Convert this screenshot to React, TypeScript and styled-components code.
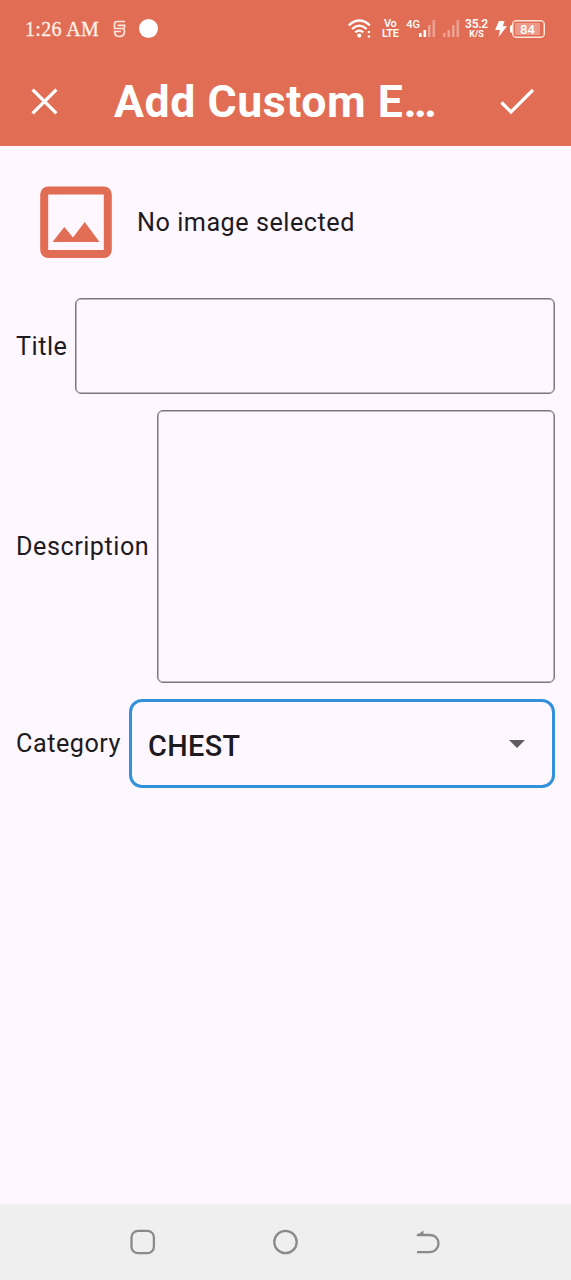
import React from "react";
import styled, { createGlobalStyle } from "styled-components";

const coral = "#e26d55";
const ink = "#1d1b20";

const GlobalStyle = createGlobalStyle`
  * { box-sizing: border-box; }
  body { margin: 0; background: #fef7ff; }
  button { border: 0; padding: 0; background: none; color: inherit; display: flex; }
  svg { display: block; flex: none; }
`;

const Screen = styled.div`
  width: 571px;
  height: 1280px;
  display: flex;
  flex-direction: column;
  overflow: hidden;
  background: #fef7ff;
  color: ${ink};
  font-family: Roboto, "Liberation Sans", sans-serif;
`;

const Header = styled.header`
  height: 146px;
  flex: none;
  background: ${coral};
  color: #fff;
`;

const StatusBar = styled.div`
  height: 57px;
  padding: 0 26px 0 25px;
  display: flex;
  align-items: center;
  justify-content: space-between;
`;

const StatusGroup = styled.div`
  display: flex;
  align-items: center;
`;

const Clock = styled.span`
  width: 75px;
  margin-right: 13px;
  font: 20px/24px "Liberation Serif", serif;
  letter-spacing: 0.35px;
  white-space: nowrap;
  color: #fff1e8;
  -webkit-text-stroke: 0.3px #fff1e8;
`;

const Dot = styled.span`
  width: 19px;
  height: 19px;
  margin-left: 13px;
  border-radius: 50%;
  background: #fff;
`;

const Stacked = styled.span<{ $left: number; $width: number }>`
  width: ${(p) => p.$width}px;
  margin-left: ${(p) => p.$left}px;
  display: flex;
  flex-direction: column;
  align-items: center;
  font-weight: 600;
  font-size: 11px;
  line-height: 10px;
  letter-spacing: -0.3px;
  white-space: nowrap;
`;

const Rate = styled.span`
  font-size: 12px;
  line-height: 11px;
`;

const RateUnit = styled.span`
  font-size: 9px;
  line-height: 8px;
  font-weight: 700;
  letter-spacing: 0;
`;

const Network = styled.span`
  margin: 0 -1px 8px 8px;
  font-size: 11px;
  line-height: 10px;
  font-weight: 500;
`;

const BatteryTip = styled.span`
  width: 2px;
  height: 8px;
  margin-left: 3px;
  border-radius: 2px 0 0 2px;
  background: #fff;
`;

const Battery = styled.span`
  width: 33px;
  height: 18px;
  padding: 2px;
  border: 1px solid #ffe5dc;
  box-shadow: inset 0 0 0 0.5px #ffe5dc;
  border-radius: 4px;
`;

const Charge = styled.span`
  display: block;
  width: 92%;
  height: 100%;
  background: #ee9a8a;
  border-radius: 1px;
  font-size: 13px;
  line-height: 13px;
  font-weight: 500;
  padding-left: 5px;
`;

const AppBar = styled.div`
  height: 89px;
  padding: 0 37px 0 31px;
  display: flex;
  align-items: center;
`;

const Heading = styled.h1`
  margin: 0 0 0 56px;
  white-space: nowrap;
  font-size: 44.6px;
  line-height: 54px;
  letter-spacing: 0.55px;
  font-weight: 700;
`;

const Confirm = styled.button`
  margin-left: auto;
`;

const Form = styled.main`
  flex: 1;
  padding: 40px 16px 0;
  display: flex;
  flex-direction: column;
`;

const ImageRow = styled.div`
  height: 72px;
  margin: 0 0 40px 24px;
  display: flex;
  align-items: center;
  gap: 25px;
`;

const Text = styled.span`
  flex: none;
  padding-top: 1px;
  font-size: 25.2px;
  line-height: 38px;
  letter-spacing: 0.52px;
`;

const Row = styled.label<{ $height: number }>`
  height: ${(p) => p.$height}px;
  margin-bottom: 16px;
  display: flex;
  align-items: center;
  gap: 8px;
`;

const fieldBorder = "1px solid #7c7680";
const fieldEdge = "inset 0 0 0 0.5px #7c7680";

const Input = styled.input`
  flex: 1;
  min-width: 0;
  height: 100%;
  border: ${fieldBorder};
  box-shadow: ${fieldEdge};
  border-radius: 6px;
  background: transparent;
  padding: 0 18px;
  font: 25px Roboto, sans-serif;
  outline: none;
`;

const TextArea = styled.textarea`
  flex: 1;
  min-width: 0;
  height: 100%;
  border: ${fieldBorder};
  box-shadow: ${fieldEdge};
  border-radius: 6px;
  background: transparent;
  padding: 18px;
  font: 25px Roboto, sans-serif;
  resize: none;
  outline: none;
`;

const Select = styled.button`
  && {
    flex: 1;
    height: 100%;
    padding: 0 27px 0 16px;
    align-items: center;
    justify-content: space-between;
    border: 3px solid #3191db;
    border-radius: 13px;
    font: 500 28.8px/36px Roboto, sans-serif;
    letter-spacing: 0.4px;
  }
`;

const Value = styled.span`
  padding-top: 5px;
`;

const NavBar = styled.nav`
  height: 76px;
  flex: none;
  padding: 0 130px;
  display: flex;
  align-items: center;
  justify-content: space-between;
  background: #efefef;
  color: #8a8a8a;
`;

function Signal({ active = 0 }: { active?: number }) {
  return (
    <svg width="17" height="19" viewBox="0 0 17 19" fill="#fff">
      {[4, 7, 12, 17].map((h, i) => (
        <rect key={h} x={i * 4.5} y={18 - h} width="2.6" height={h} rx="0.6" opacity={i < active ? 1 : 0.36} />
      ))}
    </svg>
  );
}

export default function App() {
  return (
    <Screen>
      <GlobalStyle />
      <Header>
        <StatusBar>
          <StatusGroup>
            <Clock>1:26 AM</Clock>
            <svg width="13" height="18" viewBox="0 0 13 18" fill="none" stroke="#ffe5dc" strokeWidth="1.7">
              <path d="M12 1.5H4Q1.5 1.5 1.5 4V8.5H9.5Q11.5 8.5 11.5 11Q11.5 16.5 6.5 16.5Q1.5 16.5 1.5 11.5H8M4.5 5.3H11.5V8" />
            </svg>
            <Dot />
          </StatusGroup>
          <StatusGroup>
            <svg width="24" height="20" viewBox="0 0 24 20" fill="none" stroke="#fff" strokeWidth="2.3">
              <path d="M.8 6.3Q11.3-3.2 21.8 6.3M4 10Q11.3 3.3 18.6 10M7.3 13.4Q11.3 9.8 15.3 13.4" />
              <circle cx="11.3" cy="16.6" r="2.1" fill="#fff" stroke="none" />
              <path d="M19.8 13h2.3M19.8 17.5h2.3" strokeWidth="2" />
            </svg>
            <Stacked $left={10} $width={16}>
              <span>Vo</span>
              <span>LTE</span>
            </Stacked>
            <Network>4G</Network>
            <Signal active={2} />
            <svg width="7" height="1" />
            <Signal />
            <Stacked $left={5} $width={23}>
              <Rate>35.2</Rate>
              <RateUnit>K/S</RateUnit>
            </Stacked>
            <svg width="12" height="16" viewBox="0 0 12 16" fill="#fff" style={{ marginLeft: 7 }}>
              <path d="M4 0H9.5L7.8 5.3H12L3.5 16L5 9H0Z" />
            </svg>
            <BatteryTip />
            <Battery>
              <Charge>84</Charge>
            </Battery>
          </StatusGroup>
        </StatusBar>
        <AppBar>
          <button aria-label="Close">
            <svg width="27" height="27" viewBox="0 0 27 27" fill="none" stroke="#fff" strokeWidth="3.3">
              <path d="M1.6 1.6L25.4 25.4M25.4 1.6L1.6 25.4" />
            </svg>
          </button>
          <Heading>Add Custom E…</Heading>
          <Confirm aria-label="Save">
            <svg width="35" height="27" viewBox="0 0 35 27" fill="none" stroke="#fff" strokeWidth="3.3">
              <path d="M2.5 14.5L12 24L34 2" />
            </svg>
          </Confirm>
        </AppBar>
      </Header>
      <Form>
        <ImageRow>
          <svg width="72" height="72" viewBox="0 0 72 72" fill={coral}>
            <rect x="4.2" y="4.4" width="63.6" height="63.6" rx="4" fill="none" stroke={coral} strokeWidth="8" />
            <path d="M12.5 56L24.3 41L33 51.5L44.7 36L59.5 56Z" />
          </svg>
          <Text>No image selected</Text>
        </ImageRow>
        <Row $height={96}>
          <Text>Title</Text>
          <Input />
        </Row>
        <Row $height={273}>
          <Text>Description</Text>
          <TextArea />
        </Row>
        <Row $height={89}>
          <Text>Category</Text>
          <Select type="button">
            <Value>CHEST</Value>
            <svg width="16" height="8" viewBox="0 0 16 8" fill="#605d62">
              <path d="M0 0H16L8 8Z" />
            </svg>
          </Select>
        </Row>
      </Form>
      <NavBar>
        <svg width="26" height="26" viewBox="0 0 26 26" fill="none" stroke="currentColor" strokeWidth="2.3">
          <rect x="1.5" y="1.8" width="22.4" height="22.4" rx="6.5" />
        </svg>
        <svg width="26" height="26" viewBox="0 0 26 26" fill="none" stroke="currentColor" strokeWidth="2.3">
          <circle cx="12.5" cy="13" r="11.2" />
        </svg>
        <svg width="26" height="26" viewBox="0 0 26 26" fill="none" stroke="currentColor" strokeWidth="2.3">
          <path d="M2 6H14.5C20.5 6 23.5 10 23.5 14.5S20 23.2 14.5 23.2H2" />
          <path d="M1 6.8L8.5 1.5V6.8Z" fill="currentColor" stroke="none" />
        </svg>
      </NavBar>
    </Screen>
  );
}
